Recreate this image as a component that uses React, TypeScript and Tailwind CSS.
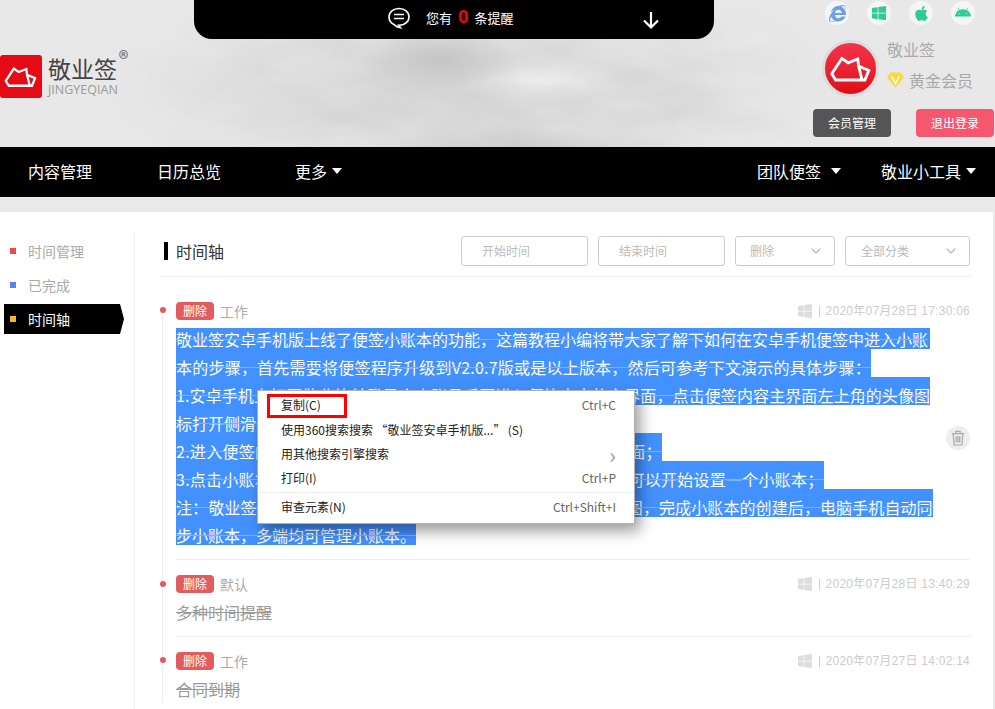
import { FaAndroid, FaApple, FaInternetExplorer, FaWindows } from 'react-icons/fa';
import { DiWindows } from 'react-icons/di';
import { LuChevronDown } from 'react-icons/lu';

function LogoMark({ className }: { className: string }) {
  return (
    <svg viewBox="0 0 100 100" className={className} fill="none" stroke="#fff" strokeWidth="6" strokeLinejoin="miter">
      <path d="M10 60 L31 28 L44 37 L64 29 L66 44 L87 53 L79 73 L18 73 Z" />
      <path d="M66 44 L73 73" />
    </svg>
  );
}

function Caret() {
  return <span className="ml-[5px] inline-block h-0 w-0 border-x-[5px] border-t-[6px] border-x-transparent border-t-white" />;
}

function Clouds() {
  return (
    <svg className="absolute inset-0 h-full w-full [mask-image:radial-gradient(ellipse_380px_120px_at_480px_90px,black_45%,transparent)]">
      <filter id="clouds" x="0" y="0" width="100%" height="100%">
        <feTurbulence type="fractalNoise" baseFrequency="0.011 0.03" numOctaves="4" seed="7" />
        <feColorMatrix values="0 0 0 0 0.6  0 0 0 0 0.6  0 0 0 0 0.6  1.1 0 0 0 -0.42" />
      </filter>
      <rect width="100%" height="100%" filter="url(#clouds)" />
    </svg>
  );
}

function DateRow({ date }: { date: string }) {
  return (
    <div className="ml-auto flex items-center text-xs text-[#ccc]">
      <FaWindows className="h-4 w-4 text-[#ddd]" />
      <span className="mx-[6px] h-[11px] w-px bg-[#ccc]" />
      <span className="font-['Liberation_Sans','Noto_Sans_CJK_SC',sans-serif] tracking-[0.25px]">{date}</span>
    </div>
  );
}

function TagRow({ cat, date }: { cat: string; date: string }) {
  return (
    <div className="flex h-[18px] items-center">
      <span className="flex h-[18px] w-[38px] items-center justify-center rounded-sm bg-[#e25b5e] text-xs text-white">删除</span>
      <span className="ml-[6px] text-sm text-[#aaa]">{cat}</span>
      <DateRow date={date} />
    </div>
  );
}

const selectedLines = [
  { text: '本的步骤，首先需要将便签程序升级到V2.0.7版或是以上版本，然后可参考下文演示的具体步骤：', cls: 'tracking-[0.22px]' },
  { text: '1.安卓手机上打开敬业签并登录个人账号后再进入便签内容的主界面，点击便签内容主界面左上角的头像图', cls: 'tracking-[0.1px]' },
  { text: '标打开侧滑菜单，找到小账本选项', cls: '' },
  { text: '2.进入便签的侧滑菜单页面后，点击小账本功能，进入小账本页面；', cls: 'tracking-[0.27px]' },
  { text: '3.点击小账本页面右下角的加号按钮，输入小账本的名称后，即可以开始设置一个小账本；', cls: 'tracking-[0.25px]' },
  { text: '注：敬业签小账本支持添加多个账本，可自定义账本名称和封面图，完成小账本的创建后，电脑手机自动同', cls: 'tracking-[0.1px]' },
  { text: '步小账本，多端均可管理小账本。', cls: '' },
];

export default function App() {
  return (
    <div className="relative h-[709px] w-[995px] overflow-hidden bg-white font-['Noto_Sans_CJK_SC','Liberation_Sans',sans-serif]">
      {/* Header */}
      <header className="relative flex h-[147px] bg-[#e8e8e8] bg-[radial-gradient(ellipse_80px_30px_at_440px_60px,#c4c4c4,transparent),radial-gradient(ellipse_90px_24px_at_540px_80px,#ececec,transparent),radial-gradient(ellipse_170px_24px_at_520px_150px,#cdcdcd,transparent),radial-gradient(ellipse_360px_100px_at_460px_90px,#d6d6d6,transparent)]">
        <Clouds />
        <div className="relative w-[194px] shrink-0 pt-[55px]">
          <div className="flex">
            <div className="flex h-[43px] w-[42px] items-center justify-center rounded-[3px] bg-[#e60a17]">
              <LogoMark className="h-[38px] w-[38px]" />
            </div>
            <div className="ml-[6px]">
              <div className="text-[23px] leading-[26px] text-[#444]">敬业签</div>
              <div className="mt-[1px] font-['Open_Sans',sans-serif] text-[12.500px] leading-[16px] text-[#999]">JINGYEQIAN</div>
            </div>
            <span className="-mt-[9px] ml-[1px] text-[20px] leading-[24px] text-[#666]">®</span>
          </div>
        </div>
        <div className="relative flex h-[39px] w-[520px] shrink-0 items-center rounded-b-[18px] bg-black pb-[4px] pl-[193px] text-white">
          <svg viewBox="0 0 24 24" className="h-[24px] w-[24px]" fill="none" stroke="#fff" strokeWidth="1.6">
            <path d="M12 2.500c5.600 0 10 3.600 10 8.400s-4.400 8.400-10 8.400h-.5l2 2.500c-4-.5-5-2.200-6-3C4.400 17.400 2 14.500 2 10.900 2 6.100 6.400 2.500 12 2.500Z" />
            <path d="M7 8.500h10M7 12.500h10" />
          </svg>
          <span className="ml-[15px] text-[13px]">您有</span>
          <span className="mx-[6px] -mt-[3px] font-['Liberation_Sans',sans-serif] text-[19px] font-bold leading-none text-[#f00]">0</span>
          <span className="text-[13px]">条提醒</span>
          <svg viewBox="0 0 20 20" className="ml-[127px] mt-[5px] h-[20px] w-[20px]" fill="none" stroke="#fff" strokeWidth="2.200">
            <path d="M10 2v15M3 10.500l7 7 7-7" />
          </svg>
        </div>
        <div className="relative flex-1 pl-[87px] pt-[1px]">
          <div className="ml-[24px] flex gap-[18px]">
            <span className="flex h-[24px] w-[24px] items-center justify-center rounded-full bg-[#f3f5f6]"><FaInternetExplorer className="h-[17px] w-[17px] text-[#6d9eea]" /></span>
            <span className="flex h-[24px] w-[24px] items-center justify-center rounded-full bg-[#f3f5f6]"><DiWindows className="h-[20px] w-[20px] text-[#2fcb8f]" /></span>
            <span className="flex h-[24px] w-[24px] items-center justify-center rounded-full bg-[#f3f5f6]"><FaApple className="h-[17px] w-[17px] text-[#2fcb8f]" /></span>
            <span className="flex h-[24px] w-[24px] items-center justify-center rounded-full bg-[#f3f5f6]"><FaAndroid className="h-[16px] w-[16px] text-[#2fcb8f]" /></span>
          </div>
        </div>
      </header>

      {/* Member block, sits over the header art */}
      <div className="absolute left-[813px] top-[40px] w-[182px]">
        <div className="flex">
          <div className="ml-[9px] flex h-[57px] w-[57px] items-center justify-center rounded-full border-[3px] border-[#dcdcdc] bg-gradient-to-b from-[#f5324a] to-[#e00a12]">
            <LogoMark className="h-[48px] w-[48px]" />
          </div>
          <div className="ml-[8px] text-[#aaa]">
            <div className="-mt-[1px] text-base leading-[20px]">敬业签</div>
            <div className="mt-[11px] flex items-center">
              <svg viewBox="0 0 18 16" className="h-[16px] w-[17px]">
                <path d="M4 0h10l4 5-9 11L0 5Z" fill="#fcd83c" />
                <path d="M5 4l4 8 4-8" fill="none" stroke="#fff" strokeWidth="1.500" />
              </svg>
              <span className="ml-[5px] text-base leading-[20px]">黄金会员</span>
            </div>
          </div>
        </div>
        <div className="mt-[12px] flex gap-[25px]">
          <button className="h-[28px] w-[78px] rounded-sm bg-[#555] text-xs text-white">会员管理</button>
          <button className="h-[28px] w-[78px] rounded-sm bg-[#f7566f] text-xs text-white">退出登录</button>
        </div>
      </div>

      {/* Nav */}
      <nav className="flex h-[50px] items-center bg-black pb-[2px] pl-[28px] pr-[19px] text-base text-white">
        <span>内容管理</span>
        <span className="ml-[65px]">日历总览</span>
        <span className="ml-[74px] flex items-center">更多<Caret /></span>
        <span className="ml-auto flex items-center">团队便签<span className="ml-[5px] flex"><Caret /></span></span>
        <span className="ml-[40px] flex items-center">敬业小工具<Caret /></span>
      </nav>

      {/* Body */}
      <div className="border-r-2 border-t-[15px] border-[#e9e9e9]">
        <div className="flex pt-[20px]">
          <aside className="h-[477px] w-[135px] shrink-0 border-r border-[#eee] pl-[4px] pt-[2px] text-sm">
            <div className="flex h-[34px] items-center text-[#aaa]">
              <span className="ml-[6px] h-[6px] w-[6px] bg-[#ec4a4d]" />
              <span className="ml-[12px]">时间管理</span>
            </div>
            <div className="flex h-[34px] items-center text-[#aaa]">
              <span className="ml-[6px] h-[6px] w-[6px] bg-[#5a82f6]" />
              <span className="ml-[12px]">已完成</span>
            </div>
            <div className="mt-[2px] flex h-[30px] w-[120px] items-center bg-black text-white [clip-path:polygon(0_0,116px_0,120px_50%,116px_100%,0_100%)]">
              <span className="ml-[6px] h-[6px] w-[6px] bg-[#fdb528]" />
              <span className="ml-[12px]">时间轴</span>
            </div>
          </aside>

          <main className="ml-[25px] w-[810px]">
            <div className="flex h-[45px] items-start border-b border-[#eee] pt-[4px]">
              <span className="ml-[4px] mt-[6px] h-[18px] w-[4px] bg-black" />
              <span className="ml-[8px] text-base leading-[30px] text-[#333]">时间轴</span>
              <div className="ml-auto flex gap-[10px] text-xs text-[#bbb]">
                <div className="flex h-[30px] w-[127px] items-center rounded-[3px] border border-[#ccc] pl-[20px]">开始时间</div>
                <div className="flex h-[30px] w-[127px] items-center rounded-[3px] border border-[#ccc] pl-[20px]">结束时间</div>
                <div className="flex h-[30px] w-[100px] items-center justify-between rounded-[3px] border border-[#ccc] pl-[14px] pr-[10px]">删除<LuChevronDown className="h-[16px] w-[16px]" /></div>
                <div className="flex h-[30px] w-[125px] items-center justify-between rounded-[3px] border border-[#ccc] pl-[15px] pr-[10px]">全部分类<LuChevronDown className="h-[16px] w-[16px]" /></div>
              </div>
            </div>

            <div className="relative pl-[16px]">
              <span className="absolute bottom-0 left-[2px] top-[33px] w-px bg-[#eee]" />

              <section className="relative h-[283px] border-b border-[#eee] pt-[25px]">
                <span className="absolute -left-[16px] top-[30px] h-[6px] w-[6px] rounded-full bg-[#e25b5e]" />
                <TagRow cat="工作" date="2020年07月28日 17:30:06" />
                <div className="mt-[8px] text-base text-white decoration-[#aaa]">
                  <div className="h-[21px] w-[754px] bg-[#4391ff] leading-[22px] line-through decoration-[#aaa]">敬业签安卓手机版上线了便签小账本的功能，这篇教程小编将带大家了解下如何在安卓手机便签中进入小账</div>
                  {selectedLines.map((line) => (
                    <div key={line.text} className={`h-[28px] w-fit bg-[#4391ff] pt-[8px] leading-[20px] ${line.cls}`}>
                      <span className="line-through decoration-[#aaa]">{line.text}</span>
                    </div>
                  ))}
                </div>
                <span className="absolute right-0 top-[149px] flex h-[24px] w-[24px] items-center justify-center rounded-full bg-[#eee]">
                  <svg viewBox="0 0 16 18" className="h-[16px] w-[14px]" fill="none" stroke="#aaa" strokeWidth="1.400">
                    <path d="M1 4h14M5.500 4V1.500h5V4M2.500 4l1 13h9l1-13M6 7v7M8 7v7M10 7v7" />
                  </svg>
                </span>
              </section>

              <section className="relative h-[77px] border-b border-[#eee] pt-[15px]">
                <span className="absolute -left-[16px] top-[21px] h-[6px] w-[6px] rounded-full bg-[#e25b5e]" />
                <TagRow cat="默认" date="2020年07月28日 13:40:29" />
                <div className="mt-[5px] text-base leading-[28px] text-[#999] line-through">多种时间提醒</div>
              </section>

              <section className="relative pt-[15px]">
                <span className="absolute -left-[16px] top-[20px] h-[6px] w-[6px] rounded-full bg-[#e25b5e]" />
                <TagRow cat="工作" date="2020年07月27日 14:02:14" />
                <div className="mt-[5px] text-base leading-[28px] text-[#999] line-through">合同到期</div>
              </section>
            </div>
          </main>
        </div>
      </div>

      {/* Context menu */}
      <div className="absolute left-[257px] top-[390px] h-[134px] w-[378px] border border-[#b0b0b0] bg-white pl-[23px] pr-[18px] text-xs text-[#222] shadow-[5px_7px_14px_rgba(0,0,0,0.4)]">
        <div className="flex h-[27px] items-center justify-between">复制(C)<span className="text-[#666]">Ctrl+C</span></div>
        <div className="flex h-[24px] items-center">使用360搜索搜索{'\u2009'}“敬业签安卓手机版...”{'\u2009'}(S)</div>
        <div className="flex h-[23px] items-center justify-between">用其他搜索引擎搜索<span className="text-[22px] leading-none text-[#999]">›</span></div>
        <div className="flex h-[25px] items-center justify-between">打印(I)<span className="text-[#666]">Ctrl+P</span></div>
        <div className="-ml-[23px] -mr-[18px] mt-[2px] border-t border-[#eee]" />
        <div className="flex h-[28px] items-center justify-between">审查元素(N)<span className="text-[#666]">Ctrl+Shift+I</span></div>
      </div>
      <span className="absolute left-[267px] top-[394px] h-[24px] w-[80px] border-[3px] border-[#f00]" />
    </div>
  );
}
